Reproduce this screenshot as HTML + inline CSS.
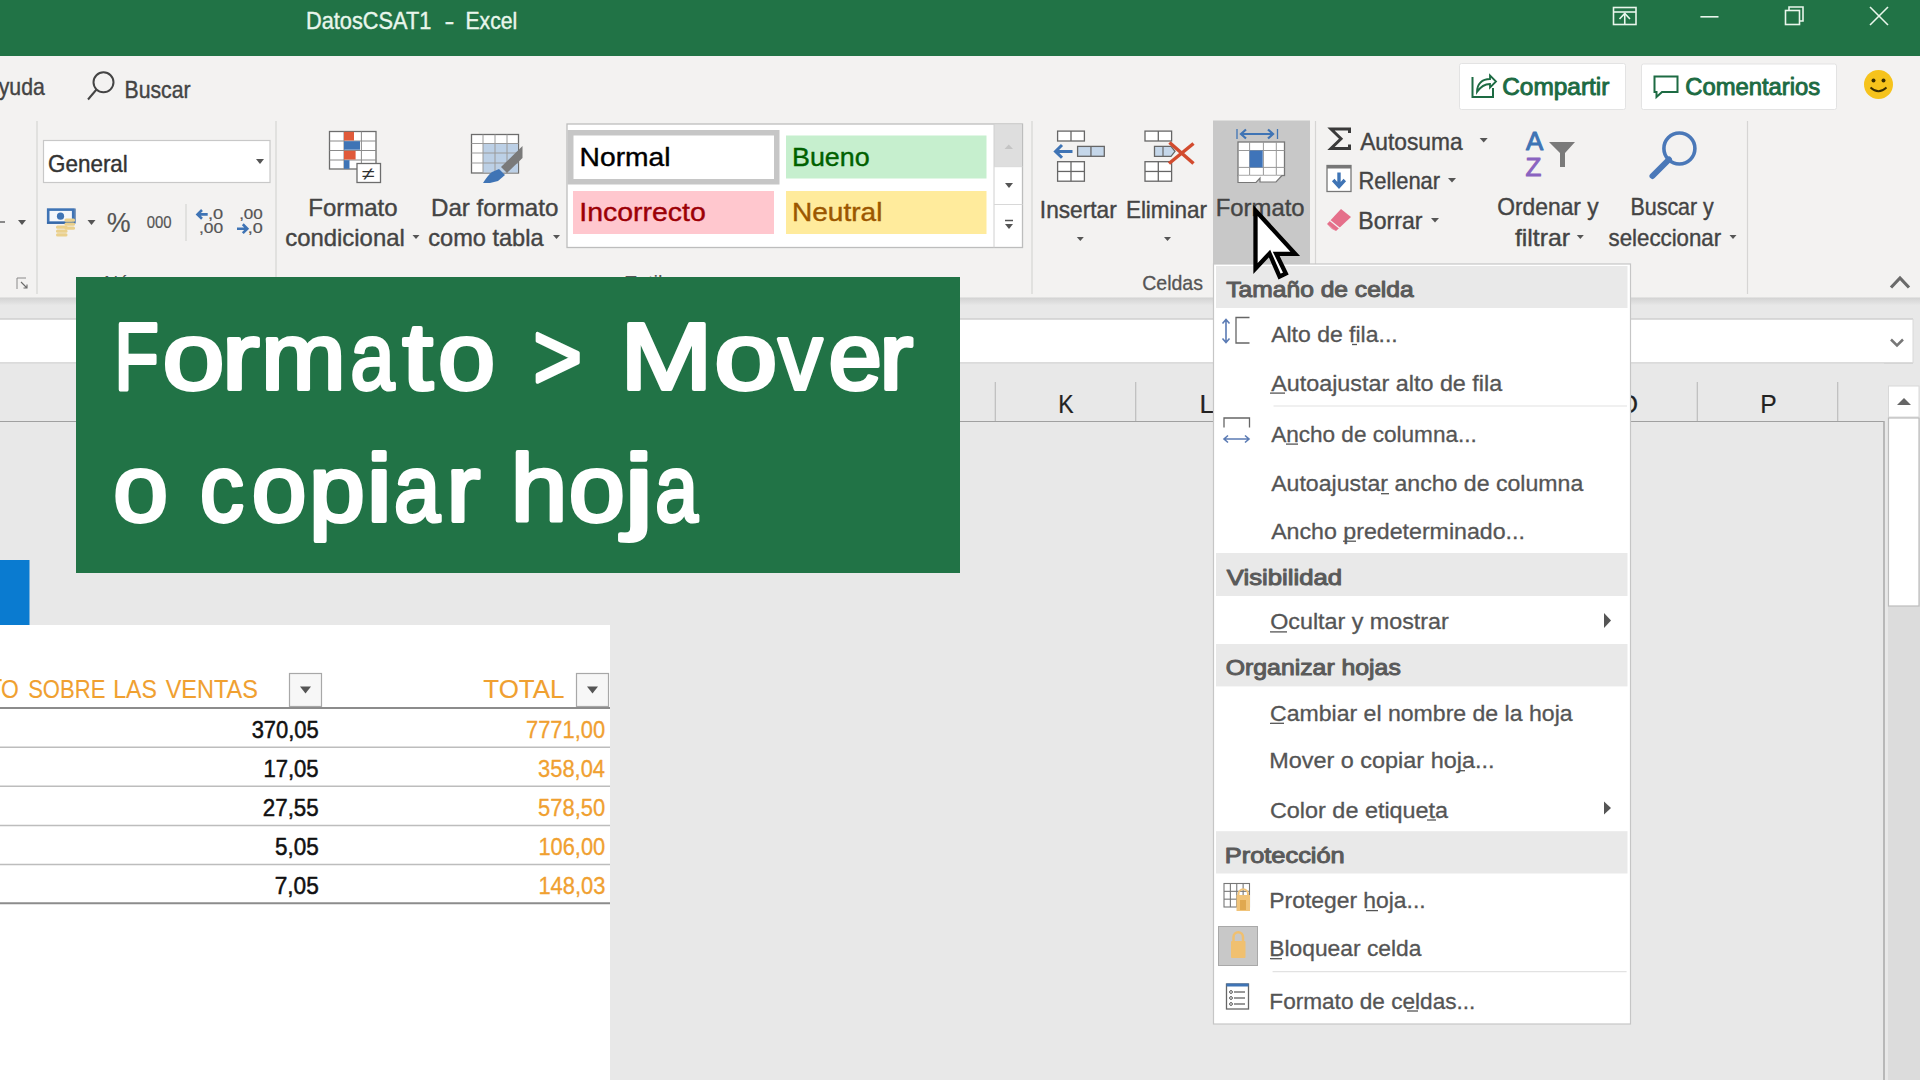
<!DOCTYPE html>
<html><head><meta charset="utf-8"><title>Excel</title>
<style>html,body{margin:0;padding:0;width:1920px;height:1080px;overflow:hidden;background:#e6e6e6}
svg{display:block;font-family:"Liberation Sans",sans-serif}</style></head>
<body><svg width="1920" height="1080" viewBox="0 0 1920 1080">
<rect x="0" y="0" width="1920" height="1080" fill="#e8e8e8"/>
<rect x="0" y="56" width="1920" height="242" fill="#f3f2f1"/>
<defs><linearGradient id="shd" x1="0" y1="0" x2="0" y2="1"><stop offset="0" stop-color="#d2d2d2"/><stop offset="1" stop-color="#e8e8e8"/></linearGradient></defs>
<rect x="0" y="297.5" width="1920" height="8" fill="url(#shd)"/>
<rect x="0" y="0" width="1920" height="56" fill="#217346"/>
<text x="306.06" y="29.3" font-size="24" fill="#e9f6ec" stroke="#e9f6ec" stroke-width="0.4" stroke-linejoin="round" textLength="125.23" lengthAdjust="spacingAndGlyphs" xml:space="preserve">DatosCSAT1</text>
<text x="444.62" y="29.3" font-size="24" fill="#e9f6ec" stroke="#e9f6ec" stroke-width="0.4" stroke-linejoin="round" textLength="9.86" lengthAdjust="spacingAndGlyphs" xml:space="preserve">-</text>
<text x="465.51" y="29.3" font-size="24" fill="#e9f6ec" stroke="#e9f6ec" stroke-width="0.4" stroke-linejoin="round" textLength="51.67" lengthAdjust="spacingAndGlyphs" xml:space="preserve">Excel</text>
<rect x="1613.5" y="7.5" width="22.5" height="17" fill="none" stroke="#e9f6ec" stroke-width="1.6"/>
<line x1="1613.5" y1="12" x2="1636" y2="12" stroke="#e9f6ec" stroke-width="1.6"/>
<line x1="1624.75" y1="13" x2="1624.75" y2="24.5" stroke="#e9f6ec" stroke-width="1.6"/>
<path d="M1619.5,19 L1624.75,13.5 L1630,19" fill="none" stroke="#e9f6ec" stroke-width="1.6"/>
<line x1="1700.4" y1="16.8" x2="1718.5" y2="16.8" stroke="#e9f6ec" stroke-width="1.6"/>
<rect x="1785.5" y="10.5" width="14" height="14" fill="none" stroke="#e9f6ec" stroke-width="1.6"/>
<path d="M1789,10.5 V7 H1803 V21 H1799.5" fill="none" stroke="#e9f6ec" stroke-width="1.6"/>
<line x1="1870" y1="7" x2="1888" y2="25" stroke="#e9f6ec" stroke-width="1.6"/>
<line x1="1888" y1="7" x2="1870" y2="25" stroke="#e9f6ec" stroke-width="1.6"/>
<text x="-1.30" y="95.0" font-size="24" fill="#444444" stroke="#444444" stroke-width="0.4" stroke-linejoin="round" textLength="46.06" lengthAdjust="spacingAndGlyphs" xml:space="preserve">yuda</text>
<circle cx="103.5" cy="82.3" r="10" fill="none" stroke="#444444" stroke-width="2"/>
<line x1="96.5" y1="89.5" x2="88" y2="99.5" stroke="#444444" stroke-width="2"/>
<text x="124.50" y="98.0" font-size="24" fill="#444444" stroke="#444444" stroke-width="0.4" stroke-linejoin="round" textLength="66.06" lengthAdjust="spacingAndGlyphs" xml:space="preserve">Buscar</text>
<rect x="1459.5" y="63.5" width="166" height="46" fill="#ffffff" stroke="#e3e3e3" stroke-width="1" rx="2"/>
<path d="M1472.5,77 V97 H1493 V88" fill="none" stroke="#1d6b43" stroke-width="2"/>
<path d="M1477,92 C1477,84 1482,79 1490,79 V75.5 L1496,81.5 L1490,87.5 V84 C1485,84 1481,86 1477,92 Z" fill="none" stroke="#1d6b43" stroke-width="1.8"/>
<text x="1502.23" y="95.0" font-size="23" fill="#1d6b43" stroke="#1d6b43" stroke-width="0.9" stroke-linejoin="round" textLength="107.15" lengthAdjust="spacingAndGlyphs" xml:space="preserve">Compartir</text>
<rect x="1641.5" y="64" width="195" height="45.5" fill="#ffffff" stroke="#e3e3e3" stroke-width="1" rx="2"/>
<path d="M1654.5,76.5 H1677.5 V92 H1662 L1656.5,97 V92 H1654.5 Z" fill="none" stroke="#1d6b43" stroke-width="2"/>
<text x="1685.26" y="95.0" font-size="23" fill="#1d6b43" stroke="#1d6b43" stroke-width="0.9" stroke-linejoin="round" textLength="134.97" lengthAdjust="spacingAndGlyphs" xml:space="preserve">Comentarios</text>
<circle cx="1878.5" cy="84.5" r="14.5" fill="#f6c31c"/>
<circle cx="1873.5" cy="80.5" r="2" fill="#3a2e00"/><circle cx="1883.5" cy="80.5" r="2" fill="#3a2e00"/>
<path d="M1870.5,87.5 Q1878.5,95 1886.5,87.5" fill="none" stroke="#3a2e00" stroke-width="1.8"/>
<line x1="37" y1="121" x2="37" y2="294" stroke="#d6d5d4" stroke-width="1.2"/>
<line x1="276" y1="121" x2="276" y2="294" stroke="#d6d5d4" stroke-width="1.2"/>
<line x1="1032" y1="121" x2="1032" y2="294" stroke="#d6d5d4" stroke-width="1.2"/>
<line x1="1315.5" y1="121" x2="1315.5" y2="294" stroke="#d6d5d4" stroke-width="1.2"/>
<line x1="1747.5" y1="121" x2="1747.5" y2="294" stroke="#d6d5d4" stroke-width="1.2"/>
<line x1="186" y1="204" x2="186" y2="241" stroke="#d6d5d4" stroke-width="1.2"/>
<line x1="0" y1="222" x2="5" y2="222" stroke="#666" stroke-width="1.5"/>
<path d="M18.0,220 L26.0,220 L22,225 Z" fill="#555"/>
<path d="M17,289 V278 H26" fill="none" stroke="#8a8a8a" stroke-width="1"/>
<path d="M21,282 L27,288 M27,284.5 V288 H23.5" fill="none" stroke="#6a6a6a" stroke-width="1.1"/>
<rect x="43.5" y="140.5" width="226.5" height="42" fill="#ffffff" stroke="#c8c8c8" stroke-width="1.2"/>
<text x="48.08" y="172.0" font-size="24" fill="#333" stroke="#333" stroke-width="0.4" stroke-linejoin="round" textLength="79.71" lengthAdjust="spacingAndGlyphs" xml:space="preserve">General</text>
<path d="M256.0,159 L264.0,159 L260,164 Z" fill="#555"/>
<rect x="48.2" y="209.6" width="25" height="13" fill="#f4f7fb" stroke="#3f74b5" stroke-width="2.6"/>
<path d="M47,223 H75 V208.5" fill="none" stroke="#2f5f9e" stroke-width="1.2"/>
<circle cx="60.5" cy="216.2" r="3.6" fill="#3f74b5"/>
<rect x="64.5" y="218.5" width="10.5" height="3.3" fill="#ead08c" rx="1.5"/>
<rect x="64.5" y="222.5" width="10.5" height="3.3" fill="#ead08c" rx="1.5"/>
<rect x="64.5" y="226.5" width="10.5" height="3.3" fill="#ead08c" rx="1.5"/>
<rect x="56" y="225.5" width="11.5" height="3.3" fill="#ead08c" rx="1.5"/>
<rect x="56" y="229.5" width="11.5" height="3.3" fill="#ead08c" rx="1.5"/>
<rect x="56" y="233.2" width="11.5" height="3.3" fill="#ead08c" rx="1.5"/>
<path d="M87.5,220 L95.5,220 L91.5,225 Z" fill="#555"/>
<text x="106.79" y="232.0" font-size="28" fill="#555" stroke="#555" stroke-width="0.2" stroke-linejoin="round" textLength="23.89" lengthAdjust="spacingAndGlyphs" xml:space="preserve">%</text>
<text x="146.70" y="227.5" font-size="16" fill="#555" stroke="#555" stroke-width="0.2" stroke-linejoin="round" textLength="24.87" lengthAdjust="spacingAndGlyphs" xml:space="preserve">000</text>
<path d="M197.5,214.4 H207.7 M202,210 L197.5,214.4 L202,218.8" fill="none" stroke="#3f74b5" stroke-width="2.6"/>
<text x="207.96" y="219.2" font-size="14" fill="#555" stroke="#555" stroke-width="0.2" stroke-linejoin="round" textLength="15.15" lengthAdjust="spacingAndGlyphs" xml:space="preserve">,0</text>
<text x="199.04" y="233.0" font-size="14" fill="#555" stroke="#555" stroke-width="0.2" stroke-linejoin="round" textLength="24.16" lengthAdjust="spacingAndGlyphs" xml:space="preserve">,00</text>
<text x="239.17" y="219.2" font-size="14" fill="#555" stroke="#555" stroke-width="0.2" stroke-linejoin="round" textLength="23.61" lengthAdjust="spacingAndGlyphs" xml:space="preserve">,00</text>
<path d="M237,228.7 H247.3 M242.8,224.3 L247.3,228.7 L242.8,233.1" fill="none" stroke="#3f74b5" stroke-width="2.6"/>
<text x="247.68" y="233.0" font-size="14" fill="#555" stroke="#555" stroke-width="0.2" stroke-linejoin="round" textLength="15.03" lengthAdjust="spacingAndGlyphs" xml:space="preserve">,0</text>
<text x="104.0" y="290.0" font-size="20" fill="#555" textLength="70.0" lengthAdjust="spacingAndGlyphs" xml:space="preserve">Número</text>
<text x="624.0" y="290.0" font-size="20" fill="#555" textLength="60.0" lengthAdjust="spacingAndGlyphs" xml:space="preserve">Estilos</text>
<rect x="329.5" y="131.5" width="46.5" height="37.5" fill="#ffffff" stroke="#6d6d6d" stroke-width="1.3"/>
<line x1="344" y1="131.5" x2="344" y2="169" stroke="#8a8a8a" stroke-width="1"/>
<line x1="361.4" y1="131.5" x2="361.4" y2="169" stroke="#8a8a8a" stroke-width="1"/>
<line x1="329.5" y1="141" x2="376" y2="141" stroke="#8a8a8a" stroke-width="1"/>
<line x1="329.5" y1="150.5" x2="376" y2="150.5" stroke="#8a8a8a" stroke-width="1"/>
<line x1="329.5" y1="160" x2="376" y2="160" stroke="#8a8a8a" stroke-width="1"/>
<rect x="344" y="131.8" width="10" height="8.7" fill="#e05a3a"/>
<rect x="344" y="141.2" width="16" height="8.5" fill="#3f74b5"/>
<rect x="344" y="150.8" width="11.6" height="8.7" fill="#e05a3a"/>
<rect x="344" y="160.2" width="5.5" height="8.6" fill="#3f74b5"/>
<rect x="357" y="163.5" width="23.5" height="19" fill="#ffffff" stroke="#6d6d6d" stroke-width="1.3"/>
<text x="362.0" y="180.0" font-size="18" fill="#333" textLength="13.0" lengthAdjust="spacingAndGlyphs" xml:space="preserve">≠</text>
<text x="308.28" y="216.0" font-size="24" fill="#444444" stroke="#444444" stroke-width="0.4" stroke-linejoin="round" textLength="89.31" lengthAdjust="spacingAndGlyphs" xml:space="preserve">Formato</text>
<text x="285.24" y="246.0" font-size="24" fill="#444444" stroke="#444444" stroke-width="0.4" stroke-linejoin="round" textLength="119.56" lengthAdjust="spacingAndGlyphs" xml:space="preserve">condicional</text>
<path d="M412.5,235 L419.5,235 L416,239 Z" fill="#555"/>
<rect x="471.5" y="134.5" width="47" height="38.5" fill="#ffffff" stroke="#6d6d6d" stroke-width="1.3"/>
<rect x="483" y="143.5" width="35" height="29" fill="#bcd0e6"/>
<line x1="483" y1="134.5" x2="483" y2="173" stroke="#9a9a9a" stroke-width="1"/>
<line x1="495" y1="134.5" x2="495" y2="173" stroke="#9a9a9a" stroke-width="1"/>
<line x1="507" y1="134.5" x2="507" y2="173" stroke="#9a9a9a" stroke-width="1"/>
<line x1="471.5" y1="143.5" x2="518.5" y2="143.5" stroke="#9a9a9a" stroke-width="1"/>
<line x1="471.5" y1="153" x2="518.5" y2="153" stroke="#9a9a9a" stroke-width="1"/>
<line x1="471.5" y1="163" x2="518.5" y2="163" stroke="#9a9a9a" stroke-width="1"/>
<path d="M522.5,146 L522.5,158 L507,173 L501,167 Z" fill="#7a7a7a"/>
<path d="M499,169 L505,175 L498,181 L490,183 L483,183 Q488,175 492,172 Z" fill="#3f74b5"/>
<text x="430.97" y="216.0" font-size="24" fill="#444444" stroke="#444444" stroke-width="0.4" stroke-linejoin="round" textLength="127.47" lengthAdjust="spacingAndGlyphs" xml:space="preserve">Dar formato</text>
<text x="428.26" y="246.0" font-size="24" fill="#444444" stroke="#444444" stroke-width="0.4" stroke-linejoin="round" textLength="115.34" lengthAdjust="spacingAndGlyphs" xml:space="preserve">como tabla</text>
<path d="M553.0,235 L560.0,235 L556.5,239 Z" fill="#555"/>
<rect x="567" y="124" width="455.5" height="123.5" fill="#ffffff" stroke="#bdbdbd" stroke-width="1.3"/>
<rect x="567.5" y="130" width="212" height="54.5" fill="#c6c6c6"/>
<rect x="573.5" y="135.5" width="200.5" height="43.5" fill="#ffffff"/>
<text x="579.64" y="165.8" font-size="26" fill="#000" stroke="#000" stroke-width="0.4" stroke-linejoin="round" textLength="90.92" lengthAdjust="spacingAndGlyphs" xml:space="preserve">Normal</text>
<rect x="786" y="135.5" width="200.5" height="43" fill="#c6efce"/>
<text x="792.05" y="165.8" font-size="26" fill="#006100" stroke="#006100" stroke-width="0.4" stroke-linejoin="round" textLength="77.59" lengthAdjust="spacingAndGlyphs" xml:space="preserve">Bueno</text>
<rect x="573" y="191" width="201" height="43" fill="#ffc7ce"/>
<text x="579.34" y="220.8" font-size="26" fill="#9c0006" stroke="#9c0006" stroke-width="0.4" stroke-linejoin="round" textLength="126.48" lengthAdjust="spacingAndGlyphs" xml:space="preserve">Incorrecto</text>
<rect x="786" y="191" width="200.5" height="43" fill="#ffeb9c"/>
<text x="791.96" y="220.8" font-size="26" fill="#9c5700" stroke="#9c5700" stroke-width="0.4" stroke-linejoin="round" textLength="90.42" lengthAdjust="spacingAndGlyphs" xml:space="preserve">Neutral</text>
<rect x="994" y="124.5" width="28" height="42" fill="#dedede"/>
<line x1="994" y1="124" x2="994" y2="247.5" stroke="#d0d0d0" stroke-width="1"/>
<line x1="994" y1="204.5" x2="1022.5" y2="204.5" stroke="#d8d8d8" stroke-width="1"/>
<line x1="994" y1="166.7" x2="1022.5" y2="166.7" stroke="#d8d8d8" stroke-width="1"/>
<path d="M1004.5,149 L1013,149 L1008.75,144.5 Z" fill="#c4c4c4"/>
<path d="M1005.0,183 L1013.0,183 L1009,188 Z" fill="#555"/>
<line x1="1005" y1="220.5" x2="1013" y2="220.5" stroke="#555" stroke-width="1.5"/>
<path d="M1005.0,224 L1013.0,224 L1009,229 Z" fill="#555"/>
<rect x="1213" y="120.5" width="97" height="144" fill="#c8c8c8"/>
<rect x="1057.6" y="131.1" width="26.800000000000182" height="9.900000000000006" fill="#ffffff" stroke="#666" stroke-width="1.3"/>
<line x1="1071.0" y1="131.1" x2="1071.0" y2="141" stroke="#666" stroke-width="1.3"/>
<rect x="1077.6" y="146.4" width="26.700000000000045" height="9.900000000000006" fill="#c5d7ea" stroke="#666" stroke-width="1.3"/>
<line x1="1090.9499999999998" y1="146.4" x2="1090.9499999999998" y2="156.3" stroke="#666" stroke-width="1.3"/>
<rect x="1057.6" y="161.7" width="26.800000000000182" height="19.5" fill="#ffffff" stroke="#666" stroke-width="1.3"/>
<line x1="1071.0" y1="161.7" x2="1071.0" y2="181.2" stroke="#666" stroke-width="1.3"/>
<line x1="1057.6" y1="171.45" x2="1084.4" y2="171.45" stroke="#666" stroke-width="1.3"/>
<path d="M1072.5,151.4 H1057 M1062,145 L1055.5,151.4 L1062,157.8" fill="none" stroke="#3f74b5" stroke-width="3"/>
<text x="1039.86" y="217.5" font-size="24" fill="#444444" stroke="#444444" stroke-width="0.4" stroke-linejoin="round" textLength="76.86" lengthAdjust="spacingAndGlyphs" xml:space="preserve">Insertar</text>
<path d="M1076.8,237 L1083.8,237 L1080.3,241 Z" fill="#555"/>
<rect x="1145" y="131.1" width="26.59999999999991" height="9.900000000000006" fill="#ffffff" stroke="#666" stroke-width="1.3"/>
<line x1="1158.3" y1="131.1" x2="1158.3" y2="141" stroke="#666" stroke-width="1.3"/>
<path d="M1154.5,146.4 H1171 L1175,151.3 L1171,156.3 H1154.5 Z" fill="#c5d7ea" stroke="#666" stroke-width="1.3"/>
<line x1="1163" y1="146.4" x2="1163" y2="156.3" stroke="#666" stroke-width="1.2"/>
<rect x="1145" y="161.7" width="26.59999999999991" height="19.5" fill="#ffffff" stroke="#666" stroke-width="1.3"/>
<line x1="1158.3" y1="161.7" x2="1158.3" y2="181.2" stroke="#666" stroke-width="1.3"/>
<line x1="1145" y1="171.45" x2="1171.6" y2="171.45" stroke="#666" stroke-width="1.3"/>
<path d="M1169.5,142.5 L1193.5,163.5 M1193.5,143.5 L1169,163.5" fill="none" stroke="#d24b2e" stroke-width="3.5"/>
<text x="1125.90" y="217.5" font-size="24" fill="#444444" stroke="#444444" stroke-width="0.4" stroke-linejoin="round" textLength="81.16" lengthAdjust="spacingAndGlyphs" xml:space="preserve">Eliminar</text>
<path d="M1164.0,237 L1171.0,237 L1167.5,241 Z" fill="#555"/>
<path d="M1237,129 V139 M1277.5,129 V139" fill="none" stroke="#3f74b5" stroke-width="1.3"/>
<path d="M1241,134 H1273 M1246,129.5 L1241,134 L1246,138.5 M1268,129.5 L1273,134 L1268,138.5" fill="none" stroke="#3f74b5" stroke-width="2.2"/>
<rect x="1238" y="142" width="46.5" height="33.5" fill="#ffffff" stroke="#777" stroke-width="1.3"/>
<line x1="1249.6" y1="142" x2="1249.6" y2="175.5" stroke="#999" stroke-width="1"/>
<line x1="1263.4" y1="142" x2="1263.4" y2="175.5" stroke="#999" stroke-width="1"/>
<line x1="1276.3" y1="142" x2="1276.3" y2="175.5" stroke="#999" stroke-width="1"/>
<line x1="1238" y1="150.5" x2="1284.5" y2="150.5" stroke="#999" stroke-width="1"/>
<line x1="1238" y1="167.4" x2="1284.5" y2="167.4" stroke="#999" stroke-width="1"/>
<rect x="1249.6" y="150.5" width="13.1" height="16.9" fill="#3f74b9"/>
<path d="M1238,175.5 V182.5 H1256 L1260,178 V182 H1276 L1282,175.5" fill="#ffffff" stroke="#777" stroke-width="1.2"/>
<text x="1215.79" y="216.0" font-size="24" fill="#444444" stroke="#444444" stroke-width="0.4" stroke-linejoin="round" textLength="88.79" lengthAdjust="spacingAndGlyphs" xml:space="preserve">Formato</text>
<text x="1142.17" y="289.5" font-size="21" fill="#555" stroke="#555" stroke-width="0.3" stroke-linejoin="round" textLength="60.81" lengthAdjust="spacingAndGlyphs" xml:space="preserve">Celdas</text>
<path d="M1349.5,133 V129 H1331 L1341,138.8 L1331,148.5 H1349.5 V144.5" fill="none" stroke="#3a3a3a" stroke-width="3" stroke-linejoin="miter"/>
<rect x="1327" y="165.5" width="24" height="26" fill="#ffffff" stroke="#777" stroke-width="1.3"/>
<rect x="1327" y="165" width="24" height="3.5" fill="#777"/>
<path d="M1339,172.5 V185 M1333.2,180 L1339,186.5 L1344.8,180" fill="none" stroke="#3f74b5" stroke-width="3.4"/>
<path d="M1341,209 L1351,217 L1336,231 L1327,224 Z" fill="#e56f8a"/>
<path d="M1327,224 L1336,231 L1332,229 Z" fill="#e56f8a"/>
<line x1="1330" y1="220.5" x2="1340" y2="228.5" stroke="#f3f2f1" stroke-width="1.2"/>
<text x="1360.20" y="150.0" font-size="24" fill="#444444" stroke="#444444" stroke-width="0.4" stroke-linejoin="round" textLength="102.42" lengthAdjust="spacingAndGlyphs" xml:space="preserve">Autosuma</text>
<path d="M1479.7,138 L1487.7,138 L1483.7,142.5 Z" fill="#555"/>
<text x="1358.45" y="189.2" font-size="24" fill="#444444" stroke="#444444" stroke-width="0.4" stroke-linejoin="round" textLength="81.66" lengthAdjust="spacingAndGlyphs" xml:space="preserve">Rellenar</text>
<path d="M1448.0,178 L1456.0,178 L1452,182.5 Z" fill="#555"/>
<text x="1358.35" y="229.2" font-size="24" fill="#444444" stroke="#444444" stroke-width="0.4" stroke-linejoin="round" textLength="64.13" lengthAdjust="spacingAndGlyphs" xml:space="preserve">Borrar</text>
<path d="M1431.0,218 L1439.0,218 L1435,222.5 Z" fill="#555"/>
<text x="1525.90" y="150.2" font-size="26" fill="#3f74b5" stroke="#3f74b5" stroke-width="1.0" stroke-linejoin="round" textLength="17.22" lengthAdjust="spacingAndGlyphs" xml:space="preserve">A</text>
<text x="1525.62" y="175.5" font-size="26" fill="#8a63c0" stroke="#8a63c0" stroke-width="1.0" stroke-linejoin="round" textLength="15.88" lengthAdjust="spacingAndGlyphs" xml:space="preserve">Z</text>
<path d="M1549,142 H1575 L1565,153 V167 H1560 V153 Z" fill="#7a7a7a"/>
<text x="1497.29" y="215.0" font-size="24" fill="#444444" stroke="#444444" stroke-width="0.4" stroke-linejoin="round" textLength="101.42" lengthAdjust="spacingAndGlyphs" xml:space="preserve">Ordenar y</text>
<text x="1514.95" y="245.8" font-size="24" fill="#444444" stroke="#444444" stroke-width="0.4" stroke-linejoin="round" textLength="55.15" lengthAdjust="spacingAndGlyphs" xml:space="preserve">filtrar</text>
<path d="M1576.8,235 L1583.8,235 L1580.3,239 Z" fill="#555"/>
<circle cx="1679.4" cy="148.5" r="15.5" fill="none" stroke="#4a78b8" stroke-width="3.6"/>
<line x1="1669" y1="159.5" x2="1652.5" y2="176" stroke="#4a78b8" stroke-width="6" stroke-linecap="round"/>
<text x="1630.49" y="214.5" font-size="24" fill="#444444" stroke="#444444" stroke-width="0.4" stroke-linejoin="round" textLength="83.31" lengthAdjust="spacingAndGlyphs" xml:space="preserve">Buscar y</text>
<text x="1608.53" y="245.8" font-size="24" fill="#444444" stroke="#444444" stroke-width="0.4" stroke-linejoin="round" textLength="112.67" lengthAdjust="spacingAndGlyphs" xml:space="preserve">seleccionar</text>
<path d="M1729.5,235 L1736.5,235 L1733,239 Z" fill="#555"/>
<path d="M1891,287.5 L1900,278 L1909,287.5" fill="none" stroke="#6a6a6a" stroke-width="3.2"/>
<rect x="0" y="319" width="1913" height="44" fill="#ffffff"/>
<line x1="0" y1="319" x2="1913" y2="319" stroke="#cfcfcf" stroke-width="1.3"/>
<line x1="0" y1="363" x2="1913" y2="363" stroke="#cfcfcf" stroke-width="1.3"/>
<line x1="1913" y1="319" x2="1913" y2="363" stroke="#d8d8d8" stroke-width="1"/>
<path d="M1891,339.5 L1897,345.5 L1903,339.5" fill="none" stroke="#777" stroke-width="2.5"/>
<rect x="0" y="363.5" width="1884" height="57.5" fill="#e8e8e8"/>
<line x1="0" y1="421.5" x2="1884" y2="421.5" stroke="#a0a0a0" stroke-width="1.2"/>
<line x1="854.9" y1="382" x2="854.9" y2="421" stroke="#bdbdbd" stroke-width="1.2"/>
<line x1="995.3" y1="382" x2="995.3" y2="421" stroke="#bdbdbd" stroke-width="1.2"/>
<line x1="1135.7" y1="382" x2="1135.7" y2="421" stroke="#bdbdbd" stroke-width="1.2"/>
<line x1="1276.1" y1="382" x2="1276.1" y2="421" stroke="#bdbdbd" stroke-width="1.2"/>
<line x1="1416.5" y1="382" x2="1416.5" y2="421" stroke="#bdbdbd" stroke-width="1.2"/>
<line x1="1556.9" y1="382" x2="1556.9" y2="421" stroke="#bdbdbd" stroke-width="1.2"/>
<line x1="1697.3" y1="382" x2="1697.3" y2="421" stroke="#bdbdbd" stroke-width="1.2"/>
<line x1="1837.7" y1="382" x2="1837.7" y2="421" stroke="#bdbdbd" stroke-width="1.2"/>
<text x="1058.25" y="412.7" font-size="26" fill="#222" stroke="#222" stroke-width="0.2" stroke-linejoin="round" textLength="15.45" lengthAdjust="spacingAndGlyphs" xml:space="preserve">K</text>
<text x="1199.50" y="412.7" font-size="26" fill="#222" stroke="#222" stroke-width="0.2" stroke-linejoin="round" textLength="14.58" lengthAdjust="spacingAndGlyphs" xml:space="preserve">L</text>
<text x="1618.07" y="412.7" font-size="26" fill="#222" stroke="#222" stroke-width="0.2" stroke-linejoin="round" textLength="20.07" lengthAdjust="spacingAndGlyphs" xml:space="preserve">O</text>
<text x="1760.13" y="412.7" font-size="26" fill="#222" stroke="#222" stroke-width="0.2" stroke-linejoin="round" textLength="16.43" lengthAdjust="spacingAndGlyphs" xml:space="preserve">P</text>
<line x1="1884" y1="421" x2="1884" y2="1080" stroke="#a8a8a8" stroke-width="1.5"/>
<rect x="1888" y="418" width="32" height="662" fill="#dcdcdc"/>
<rect x="1888.5" y="386" width="30.5" height="31" fill="#ffffff" stroke="#d8d8d8" stroke-width="1"/>
<path d="M1897,405 L1911,405 L1904,398 Z" fill="#666"/>
<rect x="1888.5" y="418" width="30.5" height="188" fill="#ffffff" stroke="#bdbdbd" stroke-width="1.2"/>
<rect x="0" y="625" width="610" height="455" fill="#ffffff"/>
<rect x="0" y="560" width="29.5" height="65" fill="#0a7bd0"/>
<text x="0.93" y="698.0" font-size="25" fill="#f0a030" stroke="#f0a030" stroke-width="0.1" stroke-linejoin="round" textLength="17.81" lengthAdjust="spacingAndGlyphs" xml:space="preserve">O</text>
<text x="28.15" y="698.0" font-size="25" fill="#f0a030" stroke="#f0a030" stroke-width="0.1" stroke-linejoin="round" textLength="77.21" lengthAdjust="spacingAndGlyphs" xml:space="preserve">SOBRE</text>
<text x="113.30" y="698.0" font-size="25" fill="#f0a030" stroke="#f0a030" stroke-width="0.1" stroke-linejoin="round" textLength="43.60" lengthAdjust="spacingAndGlyphs" xml:space="preserve">LAS</text>
<text x="165.65" y="698.0" font-size="25" fill="#f0a030" stroke="#f0a030" stroke-width="0.1" stroke-linejoin="round" textLength="92.20" lengthAdjust="spacingAndGlyphs" xml:space="preserve">VENTAS</text>
<rect x="0" y="679" width="1.6" height="2.2" fill="#f0a030"/>
<text x="483.28" y="698.0" font-size="25" fill="#f0a030" stroke="#f0a030" stroke-width="0.1" stroke-linejoin="round" textLength="81.20" lengthAdjust="spacingAndGlyphs" xml:space="preserve">TOTAL</text>
<rect x="289.5" y="673.5" width="32.0" height="33" fill="#f7f7f7" stroke="#a8a8a8" stroke-width="1.2"/>
<path d="M300.0,686.5 L311.0,686.5 L305.5,693.5 Z" fill="#555"/>
<rect x="576.5" y="673.5" width="32.0" height="33" fill="#f7f7f7" stroke="#a8a8a8" stroke-width="1.2"/>
<path d="M587.0,686.5 L598.0,686.5 L592.5,693.5 Z" fill="#555"/>
<line x1="0" y1="708" x2="610" y2="708" stroke="#8c8c8c" stroke-width="2"/>
<line x1="0" y1="747.2" x2="610" y2="747.2" stroke="#bdbdbd" stroke-width="1.5"/>
<line x1="0" y1="786.3" x2="610" y2="786.3" stroke="#bdbdbd" stroke-width="1.5"/>
<line x1="0" y1="825.4" x2="610" y2="825.4" stroke="#bdbdbd" stroke-width="1.5"/>
<line x1="0" y1="864.4" x2="610" y2="864.4" stroke="#bdbdbd" stroke-width="1.5"/>
<line x1="0" y1="903.3" x2="610" y2="903.3" stroke="#8c8c8c" stroke-width="2"/>
<text x="251.67" y="738.3" font-size="23" fill="#111" stroke="#111" stroke-width="0.5" stroke-linejoin="round" textLength="67.12" lengthAdjust="spacingAndGlyphs" xml:space="preserve">370,05</text>
<text x="526.06" y="738.3" font-size="23" fill="#f0a030" stroke="#f0a030" stroke-width="0.3" stroke-linejoin="round" textLength="79.05" lengthAdjust="spacingAndGlyphs" xml:space="preserve">7771,00</text>
<text x="263.40" y="777.1" font-size="23" fill="#111" stroke="#111" stroke-width="0.5" stroke-linejoin="round" textLength="55.26" lengthAdjust="spacingAndGlyphs" xml:space="preserve">17,05</text>
<text x="538.08" y="777.1" font-size="23" fill="#f0a030" stroke="#f0a030" stroke-width="0.3" stroke-linejoin="round" textLength="66.89" lengthAdjust="spacingAndGlyphs" xml:space="preserve">358,04</text>
<text x="262.83" y="815.9" font-size="23" fill="#111" stroke="#111" stroke-width="0.5" stroke-linejoin="round" textLength="55.83" lengthAdjust="spacingAndGlyphs" xml:space="preserve">27,55</text>
<text x="538.07" y="815.9" font-size="23" fill="#f0a030" stroke="#f0a030" stroke-width="0.3" stroke-linejoin="round" textLength="67.12" lengthAdjust="spacingAndGlyphs" xml:space="preserve">578,50</text>
<text x="274.95" y="854.7" font-size="23" fill="#111" stroke="#111" stroke-width="0.5" stroke-linejoin="round" textLength="43.81" lengthAdjust="spacingAndGlyphs" xml:space="preserve">5,05</text>
<text x="538.42" y="854.7" font-size="23" fill="#f0a030" stroke="#f0a030" stroke-width="0.3" stroke-linejoin="round" textLength="66.76" lengthAdjust="spacingAndGlyphs" xml:space="preserve">106,00</text>
<text x="274.72" y="893.5" font-size="23" fill="#111" stroke="#111" stroke-width="0.5" stroke-linejoin="round" textLength="44.05" lengthAdjust="spacingAndGlyphs" xml:space="preserve">7,05</text>
<text x="538.42" y="893.5" font-size="23" fill="#f0a030" stroke="#f0a030" stroke-width="0.3" stroke-linejoin="round" textLength="66.99" lengthAdjust="spacingAndGlyphs" xml:space="preserve">148,03</text>
<rect x="76" y="277" width="884" height="296" fill="#217346"/>
<text x="114.36" y="389.3" font-size="95" fill="#ffffff" stroke="#ffffff" stroke-width="3.8" stroke-linejoin="round" textLength="44.62" lengthAdjust="spacingAndGlyphs" xml:space="preserve">F</text>
<text x="162.64" y="389.3" font-size="95" fill="#ffffff" stroke="#ffffff" stroke-width="3.8" stroke-linejoin="round" textLength="61.98" lengthAdjust="spacingAndGlyphs" xml:space="preserve">o</text>
<text x="221.79" y="389.3" font-size="95" fill="#ffffff" stroke="#ffffff" stroke-width="3.8" stroke-linejoin="round" textLength="37.78" lengthAdjust="spacingAndGlyphs" xml:space="preserve">r</text>
<text x="260.99" y="389.3" font-size="95" fill="#ffffff" stroke="#ffffff" stroke-width="3.8" stroke-linejoin="round" textLength="84.76" lengthAdjust="spacingAndGlyphs" xml:space="preserve">m</text>
<text x="350.45" y="389.3" font-size="95" fill="#ffffff" stroke="#ffffff" stroke-width="3.8" stroke-linejoin="round" textLength="43.85" lengthAdjust="spacingAndGlyphs" xml:space="preserve">a</text>
<text x="402.50" y="389.3" font-size="95" fill="#ffffff" stroke="#ffffff" stroke-width="3.8" stroke-linejoin="round" textLength="30.45" lengthAdjust="spacingAndGlyphs" xml:space="preserve">t</text>
<text x="437.99" y="389.3" font-size="95" fill="#ffffff" stroke="#ffffff" stroke-width="3.8" stroke-linejoin="round" textLength="57.12" lengthAdjust="spacingAndGlyphs" xml:space="preserve">o</text>
<text x="533.32" y="389.3" font-size="95" fill="#ffffff" stroke="#ffffff" stroke-width="3.8" stroke-linejoin="round" textLength="48.87" lengthAdjust="spacingAndGlyphs" xml:space="preserve">&gt;</text>
<text x="620.33" y="389.3" font-size="95" fill="#ffffff" stroke="#ffffff" stroke-width="3.8" stroke-linejoin="round" textLength="92.37" lengthAdjust="spacingAndGlyphs" xml:space="preserve">M</text>
<text x="714.26" y="389.3" font-size="95" fill="#ffffff" stroke="#ffffff" stroke-width="3.8" stroke-linejoin="round" textLength="63.14" lengthAdjust="spacingAndGlyphs" xml:space="preserve">o</text>
<text x="778.15" y="389.3" font-size="95" fill="#ffffff" stroke="#ffffff" stroke-width="3.8" stroke-linejoin="round" textLength="44.15" lengthAdjust="spacingAndGlyphs" xml:space="preserve">v</text>
<text x="828.45" y="389.3" font-size="95" fill="#ffffff" stroke="#ffffff" stroke-width="3.8" stroke-linejoin="round" textLength="53.48" lengthAdjust="spacingAndGlyphs" xml:space="preserve">e</text>
<text x="879.30" y="389.3" font-size="95" fill="#ffffff" stroke="#ffffff" stroke-width="3.8" stroke-linejoin="round" textLength="33.87" lengthAdjust="spacingAndGlyphs" xml:space="preserve">r</text>
<text x="113.16" y="521.1" font-size="95" fill="#ffffff" stroke="#ffffff" stroke-width="3.8" stroke-linejoin="round" textLength="54.74" lengthAdjust="spacingAndGlyphs" xml:space="preserve">o</text>
<text x="200.08" y="521.1" font-size="95" fill="#ffffff" stroke="#ffffff" stroke-width="3.8" stroke-linejoin="round" textLength="43.95" lengthAdjust="spacingAndGlyphs" xml:space="preserve">c</text>
<text x="251.71" y="521.1" font-size="95" fill="#ffffff" stroke="#ffffff" stroke-width="3.8" stroke-linejoin="round" textLength="54.74" lengthAdjust="spacingAndGlyphs" xml:space="preserve">o</text>
<text x="308.97" y="521.1" font-size="95" fill="#ffffff" stroke="#ffffff" stroke-width="3.8" stroke-linejoin="round" textLength="55.85" lengthAdjust="spacingAndGlyphs" xml:space="preserve">p</text>
<text x="366.38" y="521.1" font-size="95" fill="#ffffff" stroke="#ffffff" stroke-width="3.8" stroke-linejoin="round" textLength="26.00" lengthAdjust="spacingAndGlyphs" xml:space="preserve">i</text>
<text x="393.98" y="521.1" font-size="95" fill="#ffffff" stroke="#ffffff" stroke-width="3.8" stroke-linejoin="round" textLength="46.09" lengthAdjust="spacingAndGlyphs" xml:space="preserve">a</text>
<text x="446.41" y="521.1" font-size="95" fill="#ffffff" stroke="#ffffff" stroke-width="3.8" stroke-linejoin="round" textLength="33.81" lengthAdjust="spacingAndGlyphs" xml:space="preserve">r</text>
<text x="510.78" y="521.1" font-size="95" fill="#ffffff" stroke="#ffffff" stroke-width="3.8" stroke-linejoin="round" textLength="56.54" lengthAdjust="spacingAndGlyphs" xml:space="preserve">h</text>
<text x="568.87" y="521.1" font-size="95" fill="#ffffff" stroke="#ffffff" stroke-width="3.8" stroke-linejoin="round" textLength="56.07" lengthAdjust="spacingAndGlyphs" xml:space="preserve">o</text>
<text x="623.91" y="521.1" font-size="95" fill="#ffffff" stroke="#ffffff" stroke-width="3.8" stroke-linejoin="round" textLength="29.70" lengthAdjust="spacingAndGlyphs" xml:space="preserve">j</text>
<text x="655.24" y="521.1" font-size="95" fill="#ffffff" stroke="#ffffff" stroke-width="3.8" stroke-linejoin="round" textLength="42.56" lengthAdjust="spacingAndGlyphs" xml:space="preserve">a</text>
<rect x="1213.5" y="264" width="417" height="760" fill="#ffffff" stroke="#c6c6c6" stroke-width="1.2"/>
<rect x="1216" y="266" width="411.5" height="42" fill="#e9e9e9"/>
<text x="1226.31" y="296.7" font-size="22" fill="#5a5a5a" stroke="#5a5a5a" stroke-width="1.0" stroke-linejoin="round" textLength="187.38" lengthAdjust="spacingAndGlyphs" xml:space="preserve">Tamaño de celda</text>
<text x="1271.15" y="342.0" font-size="22" fill="#555555" stroke="#555555" stroke-width="0.3" stroke-linejoin="round" textLength="126.53" lengthAdjust="spacingAndGlyphs" xml:space="preserve">Alto de fila...</text>
<line x1="1352" y1="344.5" x2="1357" y2="344.5" stroke="#555555" stroke-width="1.3"/>
<text x="1271.15" y="390.6" font-size="22" fill="#555555" stroke="#555555" stroke-width="0.3" stroke-linejoin="round" textLength="231.07" lengthAdjust="spacingAndGlyphs" xml:space="preserve">Autoajustar alto de fila</text>
<line x1="1270" y1="393.1" x2="1285" y2="393.1" stroke="#555555" stroke-width="1.3"/>
<line x1="1273.5" y1="406" x2="1627" y2="406" stroke="#e2e2e2" stroke-width="1.2"/>
<text x="1271.15" y="441.6" font-size="22" fill="#555555" stroke="#555555" stroke-width="0.3" stroke-linejoin="round" textLength="205.64" lengthAdjust="spacingAndGlyphs" xml:space="preserve">Ancho de columna...</text>
<line x1="1286" y1="444.1" x2="1298" y2="444.1" stroke="#555555" stroke-width="1.3"/>
<text x="1271.15" y="491.2" font-size="22" fill="#555555" stroke="#555555" stroke-width="0.3" stroke-linejoin="round" textLength="312.15" lengthAdjust="spacingAndGlyphs" xml:space="preserve">Autoajustar ancho de columna</text>
<line x1="1381" y1="493.7" x2="1389" y2="493.7" stroke="#555555" stroke-width="1.3"/>
<text x="1271.15" y="538.7" font-size="22" fill="#555555" stroke="#555555" stroke-width="0.3" stroke-linejoin="round" textLength="253.79" lengthAdjust="spacingAndGlyphs" xml:space="preserve">Ancho predeterminado...</text>
<line x1="1343" y1="541.2" x2="1356" y2="541.2" stroke="#555555" stroke-width="1.3"/>
<rect x="1216" y="553" width="411.5" height="43" fill="#e9e9e9"/>
<text x="1226.80" y="584.7" font-size="22" fill="#5a5a5a" stroke="#5a5a5a" stroke-width="1.0" stroke-linejoin="round" textLength="115.35" lengthAdjust="spacingAndGlyphs" xml:space="preserve">Visibilidad</text>
<text x="1270.22" y="629.4" font-size="22" fill="#555555" stroke="#555555" stroke-width="0.3" stroke-linejoin="round" textLength="178.54" lengthAdjust="spacingAndGlyphs" xml:space="preserve">Ocultar y mostrar</text>
<line x1="1270" y1="631.9" x2="1287" y2="631.9" stroke="#555555" stroke-width="1.3"/>
<path d="M1604,613 L1611,620.5 L1604,628 Z" fill="#555"/>
<rect x="1216" y="644" width="411.5" height="42.39999999999998" fill="#e9e9e9"/>
<text x="1225.81" y="675.0" font-size="22" fill="#5a5a5a" stroke="#5a5a5a" stroke-width="1.0" stroke-linejoin="round" textLength="175.00" lengthAdjust="spacingAndGlyphs" xml:space="preserve">Organizar hojas</text>
<text x="1270.00" y="720.8" font-size="22" fill="#555555" stroke="#555555" stroke-width="0.3" stroke-linejoin="round" textLength="302.59" lengthAdjust="spacingAndGlyphs" xml:space="preserve">Cambiar el nombre de la hoja</text>
<line x1="1270" y1="723.3" x2="1284" y2="723.3" stroke="#555555" stroke-width="1.3"/>
<text x="1269.28" y="768.2" font-size="22" fill="#555555" stroke="#555555" stroke-width="0.3" stroke-linejoin="round" textLength="225.16" lengthAdjust="spacingAndGlyphs" xml:space="preserve">Mover o copiar hoja...</text>
<line x1="1459" y1="770.7" x2="1465" y2="770.7" stroke="#555555" stroke-width="1.3"/>
<text x="1269.98" y="817.5" font-size="22" fill="#555555" stroke="#555555" stroke-width="0.3" stroke-linejoin="round" textLength="178.17" lengthAdjust="spacingAndGlyphs" xml:space="preserve">Color de etiqueta</text>
<line x1="1427" y1="820.0" x2="1436" y2="820.0" stroke="#555555" stroke-width="1.3"/>
<path d="M1604,801.5 L1611,808 L1604,814.5 Z" fill="#555"/>
<rect x="1216" y="831.2" width="411.5" height="42.299999999999955" fill="#e9e9e9"/>
<text x="1224.77" y="863.3" font-size="22" fill="#5a5a5a" stroke="#5a5a5a" stroke-width="1.0" stroke-linejoin="round" textLength="119.97" lengthAdjust="spacingAndGlyphs" xml:space="preserve">Protección</text>
<text x="1269.32" y="908.1" font-size="22" fill="#555555" stroke="#555555" stroke-width="0.3" stroke-linejoin="round" textLength="156.32" lengthAdjust="spacingAndGlyphs" xml:space="preserve">Proteger hoja...</text>
<line x1="1366" y1="910.6" x2="1378" y2="910.6" stroke="#555555" stroke-width="1.3"/>
<text x="1269.33" y="956.2" font-size="22" fill="#555555" stroke="#555555" stroke-width="0.3" stroke-linejoin="round" textLength="152.04" lengthAdjust="spacingAndGlyphs" xml:space="preserve">Bloquear celda</text>
<line x1="1270" y1="958.7" x2="1282" y2="958.7" stroke="#555555" stroke-width="1.3"/>
<line x1="1272.6" y1="971.6" x2="1626.6" y2="971.6" stroke="#e2e2e2" stroke-width="1.2"/>
<text x="1269.34" y="1008.5" font-size="22" fill="#555555" stroke="#555555" stroke-width="0.3" stroke-linejoin="round" textLength="206.02" lengthAdjust="spacingAndGlyphs" xml:space="preserve">Formato de celdas...</text>
<line x1="1407" y1="1011.0" x2="1418" y2="1011.0" stroke="#555555" stroke-width="1.3"/>
<path d="M1226,320 V342 M1222.5,323.5 L1226,319.5 L1229.5,323.5 M1222.5,338.5 L1226,342.5 L1229.5,338.5" fill="none" stroke="#5b7bb4" stroke-width="1.6"/>
<path d="M1249.5,317.5 H1236 V343 H1249.5" fill="none" stroke="#666" stroke-width="1.3"/>
<path d="M1224,427.5 V418 H1249.5 V427.5" fill="none" stroke="#666" stroke-width="1.3"/>
<path d="M1224,439 H1249 M1228,435.5 L1224,439 L1228,442.5 M1245,435.5 L1249,439 L1245,442.5" fill="none" stroke="#5b7bb4" stroke-width="1.6"/>
<rect x="1224" y="883.5" width="25.5" height="23.5" fill="#ffffff" stroke="#777" stroke-width="1.1"/>
<line x1="1230.375" y1="883.5" x2="1230.375" y2="907" stroke="#777" stroke-width="1.1"/>
<line x1="1236.75" y1="883.5" x2="1236.75" y2="907" stroke="#777" stroke-width="1.1"/>
<line x1="1243.125" y1="883.5" x2="1243.125" y2="907" stroke="#777" stroke-width="1.1"/>
<line x1="1224" y1="891.3333333333334" x2="1249.5" y2="891.3333333333334" stroke="#777" stroke-width="1.1"/>
<line x1="1224" y1="899.1666666666666" x2="1249.5" y2="899.1666666666666" stroke="#777" stroke-width="1.1"/>
<rect x="1236.5" y="895" width="13.5" height="16" fill="#f1c47a"/>
<path d="M1238.5,898 V894 A4.75,4.75 0 0 1 1248,894 V898" fill="none" stroke="#f1c47a" stroke-width="2"/>
<rect x="1240" y="900" width="6" height="10" fill="#e0a850"/>
<rect x="1218.5" y="926.5" width="39" height="39" fill="#c8c8c8" stroke="#a9a9a9" stroke-width="1"/>
<rect x="1231" y="941" width="14.5" height="17" fill="#f0c070" rx="1"/>
<path d="M1233.5,942 V937 A4.75,4.75 0 0 1 1243,937 V942" fill="none" stroke="#f0c070" stroke-width="2.5"/>
<rect x="1226.5" y="984" width="22" height="25" fill="#ffffff" stroke="#666" stroke-width="1.3"/>
<rect x="1226.5" y="983.5" width="22" height="3" fill="#3f74b5"/>
<circle cx="1231" cy="992" r="1.4" fill="none" stroke="#555" stroke-width="1"/>
<line x1="1234" y1="992" x2="1245" y2="992" stroke="#555" stroke-width="1.2"/>
<circle cx="1231" cy="998" r="1.4" fill="none" stroke="#555" stroke-width="1"/>
<line x1="1234" y1="998" x2="1245" y2="998" stroke="#555" stroke-width="1.2"/>
<circle cx="1231" cy="1004" r="1.4" fill="none" stroke="#555" stroke-width="1"/>
<line x1="1234" y1="1004" x2="1245" y2="1004" stroke="#555" stroke-width="1.2"/>
<path d="M1255.5,210.5 L1255.5,268.5 L1269.5,253.5 L1279.6,276.5 L1285.8,273.6 L1276.2,253.8 L1295.2,253.8 Z" fill="#ffffff" stroke="#000" stroke-width="4.3" stroke-linejoin="miter"/>
</svg></body></html>
